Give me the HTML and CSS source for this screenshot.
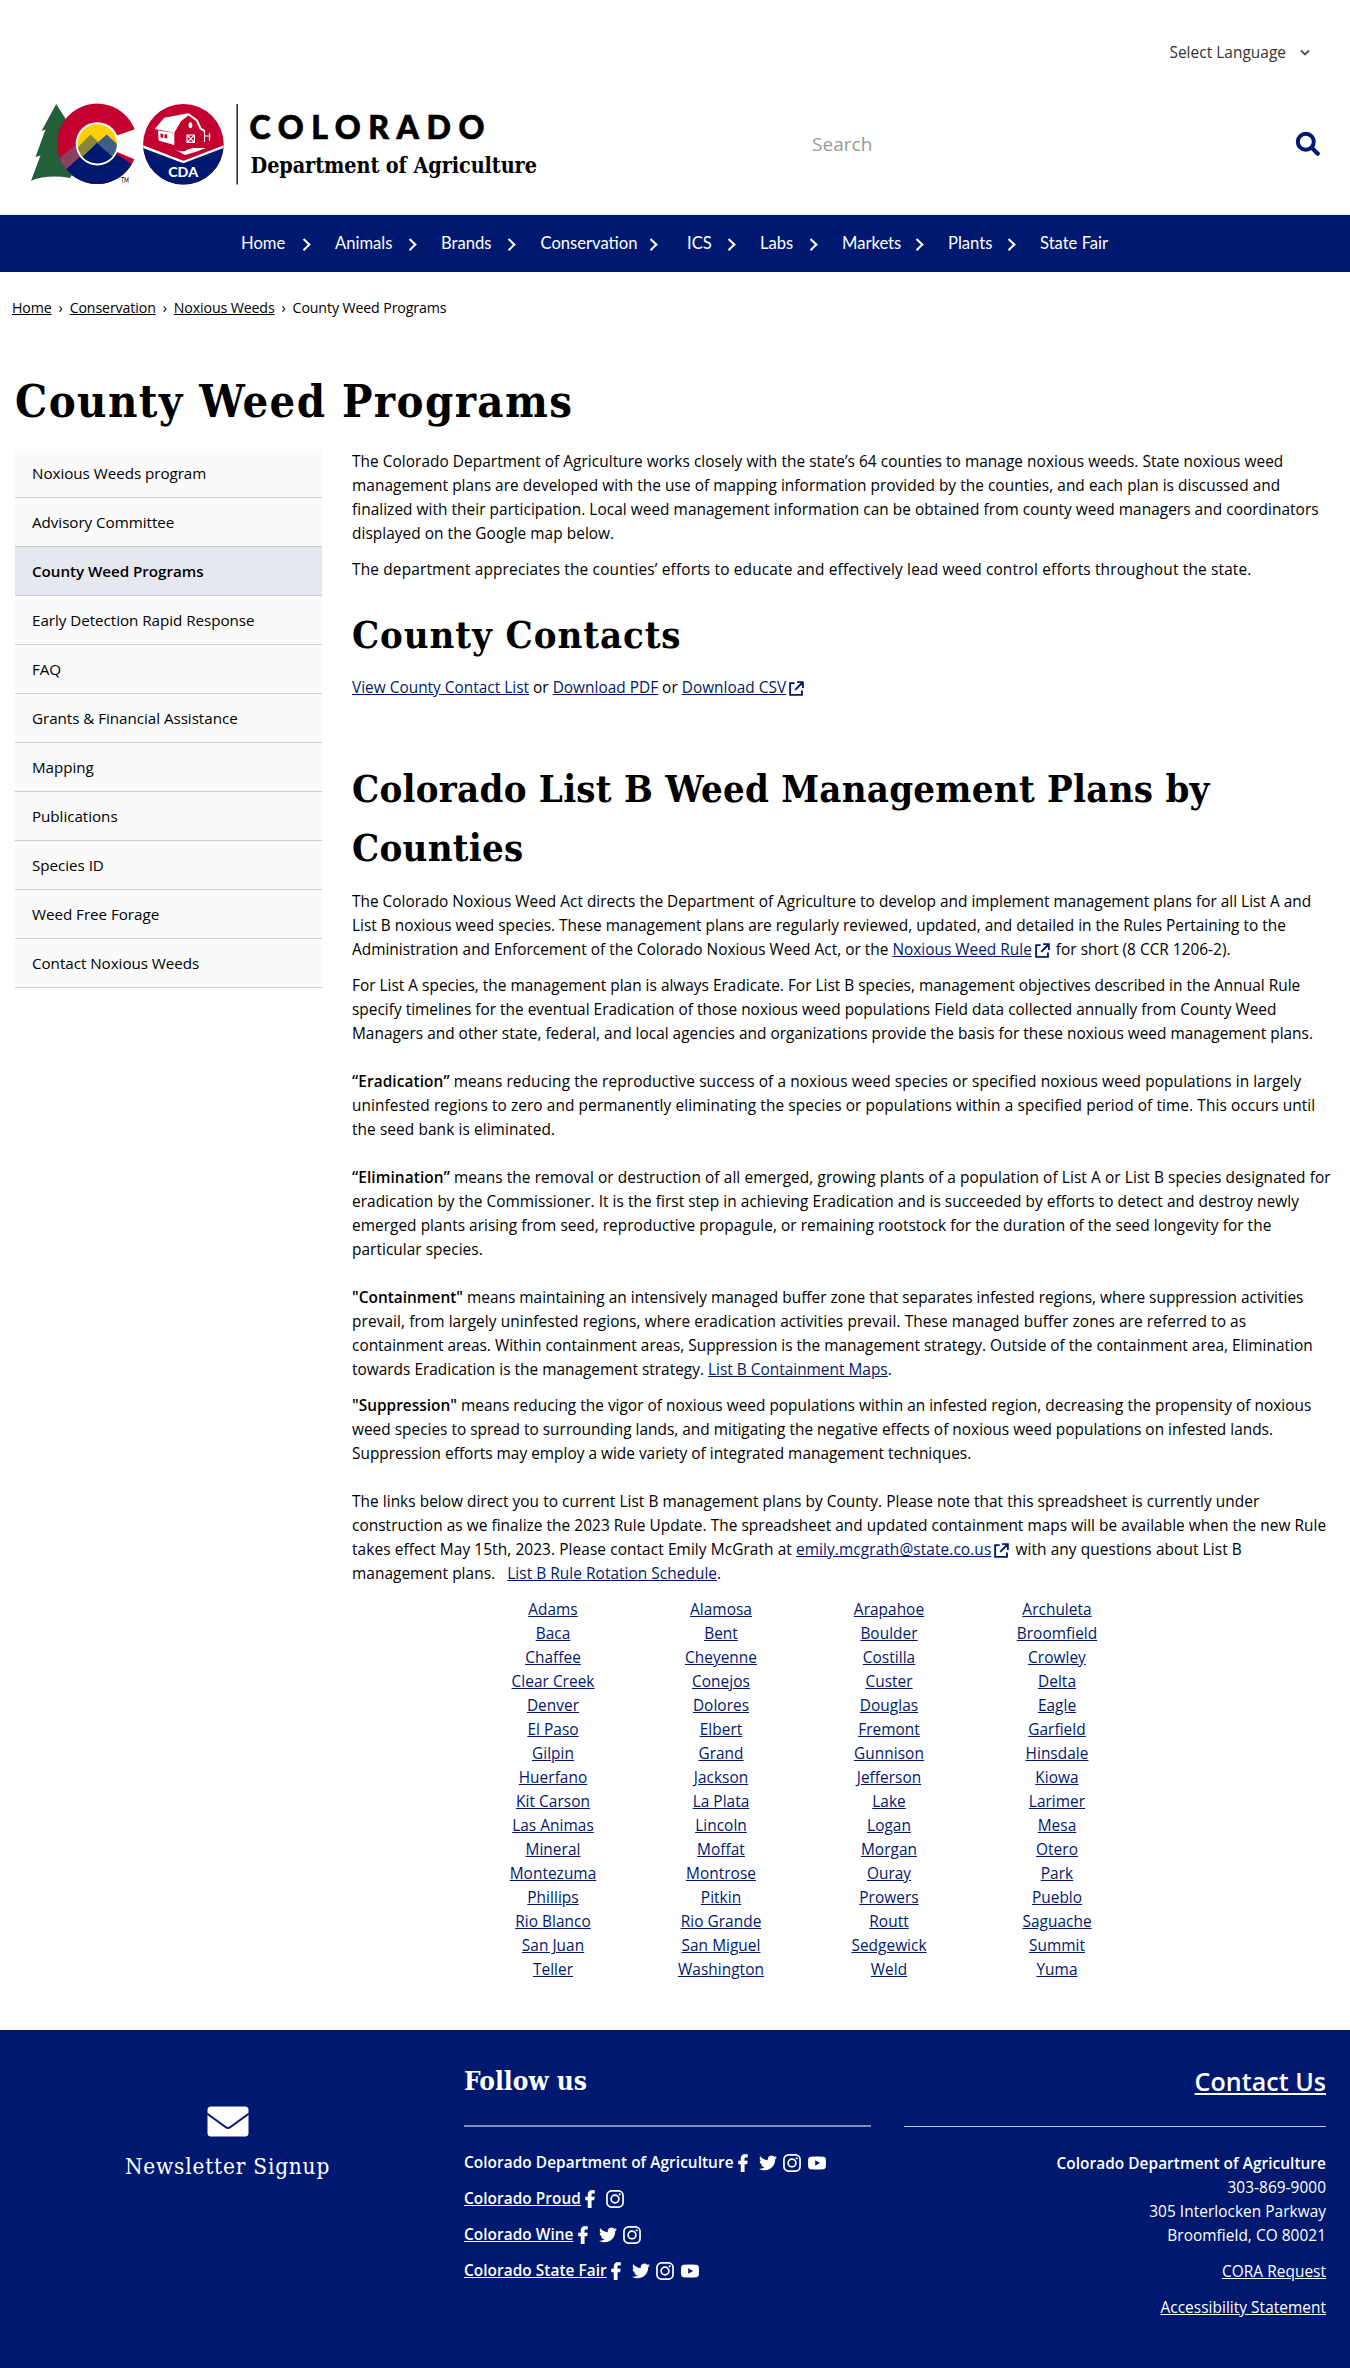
FILE: index.html
```html
<!DOCTYPE html>
<html lang="en">
<head>
<meta charset="utf-8">
<title>County Weed Programs | Department of Agriculture</title>
<link rel="stylesheet" href="styles.css">
</head>
<body>
<svg class="defs" width="0" height="0" aria-hidden="true">
  <symbol id="ext" viewBox="0 0 16 16"><path d="M6 2.2H1.2v12.6h12.6V10M8.6 1.2h6.2v6.2M14.4 1.6L6.6 9.4" fill="none" stroke="currentColor" stroke-width="2"/></symbol>
  <symbol id="fb" viewBox="0 0 18 18"><path d="M7 18v-8H4.500V6.900H7V4.700C7 1.700 8.600.2 11.200.2c1 0 1.800.1 2.300.2v2.800h-1.700c-1.200 0-1.500.6-1.500 1.500v2.200h3.100L12.900 10h-2.600v8z" fill="currentColor" stroke="currentColor" stroke-width=".5"/></symbol>
  <symbol id="tw" viewBox="0 0 24 24"><path d="M23.950 4.570a10 10 0 0 1-2.820.77 4.960 4.960 0 0 0 2.160-2.720c-.95.550-2 .960-3.130 1.180a4.920 4.920 0 0 0-8.380 4.480C7.690 8.090 4.070 6.130 1.640 3.160a4.820 4.820 0 0 0-.66 2.480c0 1.710.87 3.210 2.190 4.100a4.900 4.900 0 0 1-2.230-.62v.06a4.920 4.920 0 0 0 3.950 4.830 5 5 0 0 1-2.210.08 4.940 4.940 0 0 0 4.600 3.420A9.870 9.870 0 0 1 0 19.540a14 14 0 0 0 7.550 2.210c9.050 0 14-7.500 14-13.980 0-.21 0-.42-.02-.63a9.900 9.900 0 0 0 2.420-2.570z" fill="currentColor"/></symbol>
  <symbol id="ig" viewBox="0 0 18 18"><g fill="none" stroke="currentColor" stroke-width="1.700"><rect x=".95" y=".95" width="16.100" height="16.100" rx="4.500"/><circle cx="9" cy="9" r="3.900"/></g><circle cx="13.700" cy="4.300" r="1.100" fill="currentColor"/></symbol>
  <symbol id="yt" viewBox="0 0 18 18"><path fill-rule="evenodd" d="M2.500 2.700Q9 2.200 15.500 2.700 17.600 2.900 17.800 5q.4 4 0 8-.2 2.100-2.300 2.300-6.500.5-13 0Q.4 15.100.2 13q-.4-4 0-8 .2-2.100 2.300-2.300zM7.200 6.200v5.600L12.100 9z" fill="currentColor"/></symbol>
</svg>

<header class="header">
  <div class="language"><span>Select Language</span>
    <svg width="10" height="8" viewBox="0 0 10 8"><path d="M1 1.500l4 4 4-4" fill="none" stroke="#555" stroke-width="1.900"/></svg>
  </div>
  <div class="masthead">
    <svg class="logo" width="520" height="96" viewBox="25 96 520 96" role="img" aria-label="Colorado Department of Agriculture">
      <path fill="#23603a" d="M56.200 104L41.500 131l4-1.500-10 27.500 5-1.500-9.500 25.200Q48 174 70 178L92 144 66 123l1-2z"/>
      <clipPath id="c"><path d="M134.700 129.300A40.200 40.200 0 1 0 134.300 159.300L119 152.700 97 144 118.300 135z"/></clipPath>
      <g clip-path="url(#c)">
        <rect x="55" y="100" width="84" height="90" fill="#c3002f"/>
        <path fill="#8d3f62" d="M50 166L91 132l15 12-40 38z"/>
        <path fill="#001970" d="M62 173l35-32 45 30v20H62z"/>
      </g>
      <circle cx="97.300" cy="143.800" r="21.600" fill="#fff"/>
      <clipPath id="d"><circle cx="97.300" cy="143.800" r="19.600"/></clipPath>
      <g clip-path="url(#d)">
        <rect x="76" y="122" width="43" height="43" fill="#ffd100"/>
        <path fill="#8a8538" d="M75 150l15.500-15.500 14 14L80 165z"/>
        <path fill="#3b5f8a" d="M96 144l10.700-9.500 14 13v12H96z"/>
        <path fill="#001970" d="M78 161l19-18 21 19v6H78z"/>
      </g>
      <text x="121" y="183" class="tm" textLength="8" lengthAdjust="spacingAndGlyphs">TM</text>
      <clipPath id="b"><circle cx="183.400" cy="144.300" r="40.300"/></clipPath>
      <g clip-path="url(#b)">
        <rect x="142" y="103" width="83" height="83" fill="#c3002f"/>
        <path fill="#001970" stroke="#fff" stroke-width="2.400" d="M140 145.500l43.400 16.500 43.400-16.500V190H140z"/>
      </g>
      <g fill="#fff">
        <path d="M154.700 129l9.500-11.300L188 113.300l-8.500 8-7 11z"/>
        <path d="M158 130.500l14.300 2 2 12.500-15.600-4.500z"/>
        <ellipse cx="190.400" cy="125.300" rx="1.900" ry="3"/>
        <path d="M172 148.500q7 3.600 13 2.600 3-2.400 9-3.200h12q-10 4.200-21 7-7-4-13-6.400z"/>
      </g>
      <path fill="#c3002f" d="M160.500 133.500l2.700.4v4l-2.700-.6zM164.500 134.200l2.700.4v4l-2.700-.6z"/>
      <g fill="none" stroke="#fff">
        <path stroke-width="2" d="M173.300 144.500v-12l7-12 8-6.200 8.700 6.200 3.500 8 4 2.500"/>
        <path stroke-width="1.100" d="M187 135h7.400v7.400H187zl7.400 7.400m0-7.400l-7.400 7.400M204.500 130v12M209.500 133v8M204.500 136h6"/>
      </g>
      <text x="168.200" y="176.600" class="cda" textLength="30" lengthAdjust="spacingAndGlyphs">CDA</text>
      <path d="M237.200 104v80.500" stroke="#333" stroke-width="1.600"/>
      <text x="249.500" y="139" class="state" textLength="235">COLORADO</text>
      <text x="250.500" y="173" class="dept" textLength="286.500">Department of Agriculture</text>
    </svg>
    <div class="search"><span>Search</span>
      <svg width="26" height="26" viewBox="0 0 26 26"><circle cx="10.800" cy="10.800" r="8" fill="none" stroke="#001970" stroke-width="4"/><path d="M16.800 16.800l6 6" stroke="#001970" stroke-width="4.200" stroke-linecap="round"/></svg>
    </div>
  </div>
</header>

<nav class="nav">
  <a class="more">Home</a><a class="more">Animals</a><a class="more">Brands</a><a class="more wide">Conservation</a><a class="more">ICS</a><a class="more">Labs</a><a class="more">Markets</a><a class="more">Plants</a><a>State Fair</a>
</nav>

<div class="breadcrumb"><u>Home</u><i>›</i><u>Conservation</u><i>›</i><u>Noxious Weeds</u><i>›</i><span>County Weed Programs</span></div>

<h1>County Weed Programs</h1>

<div class="columns">
  <ul class="side">
    <li>Noxious Weeds program</li><li>Advisory Committee</li><li class="active">County Weed Programs</li><li>Early Detection Rapid Response</li><li>FAQ</li><li>Grants &amp; Financial Assistance</li><li>Mapping</li><li>Publications</li><li>Species ID</li><li>Weed Free Forage</li><li>Contact Noxious Weeds</li>
  </ul>
  <main>
    <p>The Colorado Department of Agriculture works closely with the state’s 64 counties to manage noxious weeds. State noxious weed<br>management plans are developed with the use of mapping information provided by the counties, and each plan is discussed and<br>finalized with their participation. Local weed management information can be obtained from county weed managers and coordinators<br>displayed on the Google map below.</p>
    <p class="loose">The department appreciates the counties’ efforts to educate and effectively lead weed control efforts throughout the state.</p>
    <h2>County Contacts</h2>
    <p class="tight"><a>View County Contact List</a> or <a>Download PDF</a> or <a>Download CSV</a><svg class="ext"><use href="#ext"/></svg></p>
    <h2 class="plans">Colorado List B Weed Management Plans by<br>Counties</h2>
    <p class="tight">The Colorado Noxious Weed Act directs the Department of Agriculture to develop and implement management plans for all List A and<br>List B noxious weed species. These management plans are regularly reviewed, updated, and detailed in the Rules Pertaining to the<br>Administration and Enforcement of the Colorado Noxious Weed Act, or the <a>Noxious Weed Rule</a><svg class="ext"><use href="#ext"/></svg> for short (8 CCR 1206-2).</p>
    <p><span class="tight">For List A species, the management plan is always Eradicate. For List B species, management objectives described in the Annual Rule<br>specify timelines for the eventual Eradication of those noxious weed populations Field data collected annually from County Weed<br>Managers and other state, federal, and local agencies and organizations provide the basis for these noxious weed management plans.</span><br><br><span class="open"><b>“Eradication”</b> means reducing the reproductive success of a noxious weed species or specified noxious weed populations in largely<br>uninfested regions to zero and permanently eliminating the species or populations within a specified period of time. This occurs until<br>the seed bank is eliminated.<br><br><b>“Elimination”</b> means the removal or destruction of all emerged, growing plants of a population of List A or List B species designated for</span><br>eradication by the Commissioner. It is the first step in achieving Eradication and is succeeded by efforts to detect and destroy newly<br>emerged plants arising from seed, reproductive propagule, or remaining rootstock for the duration of the seed longevity for the<br>particular species.<br><br><span class="tight"><b>"Containment"</b> means maintaining an intensively managed buffer zone that separates infested regions, where suppression activities</span><br><span class="open">prevail, from largely uninfested regions, where eradication activities prevail. These managed buffer zones are referred to as</span><br><span class="tight">containment areas. Within containment areas, Suppression is the management strategy. Outside of the containment area, Elimination<br>towards Eradication is the management strategy. <a>List B Containment Maps</a>.</span></p>
    <p><span class="tight"><b>"Suppression"</b> means reducing the vigor of noxious weed populations within an infested region, decreasing the propensity of noxious<br>weed species to spread to surrounding lands, and mitigating the negative effects of noxious weed populations on infested lands.<br>Suppression efforts may employ a wide variety of integrated management techniques.</span><br><br>The links below direct you to current List B management plans by County. Please note that this spreadsheet is currently under<br>construction as we finalize the 2023 Rule Update. The spreadsheet and updated containment maps will be available when the new Rule<br><span class="open">takes effect May 15th, 2023. Please contact Emily McGrath at <a>emily.mcgrath@state.co.us</a><svg class="ext"><use href="#ext"/></svg> with any questions about List B</span><br>management plans. &nbsp; <a>List B Rule Rotation Schedule</a>.</p>
    <div class="counties">
      <a>Adams</a><a>Alamosa</a><a>Arapahoe</a><a>Archuleta</a>
      <a>Baca</a><a>Bent</a><a>Boulder</a><a>Broomfield</a>
      <a>Chaffee</a><a>Cheyenne</a><a>Costilla</a><a>Crowley</a>
      <a>Clear Creek</a><a>Conejos</a><a>Custer</a><a>Delta</a>
      <a>Denver</a><a>Dolores</a><a>Douglas</a><a>Eagle</a>
      <a>El Paso</a><a>Elbert</a><a>Fremont</a><a>Garfield</a>
      <a>Gilpin</a><a>Grand</a><a>Gunnison</a><a>Hinsdale</a>
      <a>Huerfano</a><a>Jackson</a><a>Jefferson</a><a>Kiowa</a>
      <a>Kit Carson</a><a>La Plata</a><a>Lake</a><a>Larimer</a>
      <a>Las Animas</a><a>Lincoln</a><a>Logan</a><a>Mesa</a>
      <a>Mineral</a><a>Moffat</a><a>Morgan</a><a>Otero</a>
      <a>Montezuma</a><a>Montrose</a><a>Ouray</a><a>Park</a>
      <a>Phillips</a><a>Pitkin</a><a>Prowers</a><a>Pueblo</a>
      <a>Rio Blanco</a><a>Rio Grande</a><a>Routt</a><a>Saguache</a>
      <a>San Juan</a><a>San Miguel</a><a>Sedgewick</a><a>Summit</a>
      <a>Teller</a><a>Washington</a><a>Weld</a><a>Yuma</a>
    </div>
  </main>
</div>

<footer class="footer">
  <section class="newsletter">
    <svg width="42" height="31" viewBox="0 0 42 31"><rect width="41" height="30" x=".5" y=".5" rx="3.500" fill="#fff"/><path d="M0 7.500L18.500 21q2.500 2 5 0L42 7.500" fill="none" stroke="#001970" stroke-width="2"/></svg>
    <div>Newsletter Signup</div>
  </section>
  <section class="follow">
    <h3>Follow us</h3>
    <div class="row">Colorado Department of Agriculture<svg class="fb"><use href="#fb"/></svg><svg><use href="#tw"/></svg><svg><use href="#ig"/></svg><svg><use href="#yt"/></svg></div>
    <div class="row"><u>Colorado Proud</u><svg class="fb"><use href="#fb"/></svg><svg><use href="#ig"/></svg></div>
    <div class="row"><u>Colorado Wine</u><svg class="fb"><use href="#fb"/></svg><svg><use href="#tw"/></svg><svg><use href="#ig"/></svg></div>
    <div class="row"><u>Colorado State Fair</u><svg class="fb"><use href="#fb"/></svg><svg><use href="#tw"/></svg><svg><use href="#ig"/></svg><svg><use href="#yt"/></svg></div>
  </section>
  <section class="contact">
    <h3><u>Contact Us</u></h3>
    <p><b>Colorado Department of Agriculture</b><br>303-869-9000<br>305 Interlocken Parkway<br>Broomfield, CO 80021</p>
    <p><u>CORA Request</u></p>
    <p><u>Accessibility Statement</u></p>
  </section>
</footer>
</body>
</html>
```
FILE: styles.css
```css
* { box-sizing: border-box; }
body { margin: 0; background: #fff; color: #000; font: 15.4px/24px "Open Sans", "Noto Sans", sans-serif; letter-spacing: .05px; }
.defs { display: block; }
h1, h2, h3, p, ul { margin: 0; padding: 0; }

.header { height: 215px; padding-top: 41px; border-bottom: 1px solid #eef0f6; }
.language { display: flex; align-items: center; justify-content: flex-end; gap: 14px; padding-right: 40px; color: #333; height: 24px; }
.masthead { display: flex; align-items: flex-start; justify-content: space-between; padding: 31px 29px 0 25px; }
.logo { display: block; }
.tm { font: 7px Lato, sans-serif; }
.cda { font: 900 14px Lato, sans-serif; fill: #fff; }
.state { font: 900 32px Lato, sans-serif; stroke: #000; stroke-width: .7px; }
.dept { font: bold 21.400px "DejaVu Serif Condensed", "DejaVu Serif", serif; }
.search { display: flex; justify-content: space-between; align-items: center; width: 509px; height: 96px; color: #999; font-size: 19px; }

.nav { display: grid; grid-template-columns: 94px 106px 99.500px 146.500px 73px 82px 106px 92px auto; background: #001970; color: #fff; height: 57px; padding: 0 200px 0 241px; font: 16.600px/57px Lato, sans-serif; letter-spacing: 0; white-space: nowrap; }
.more { display: flex; justify-content: space-between; align-items: center; padding-right: 27px; }
.wide { padding-right: 32px; }
.more::after { content: ""; width: 6.500px; height: 6.500px; margin-top: 2px; border: solid #fff; border-width: 2px 2px 0 0; transform: rotate(45deg); }

.breadcrumb { display: flex; padding: 24px 12px 0; font-size: 14.200px; letter-spacing: -.120px; }
.breadcrumb i { font-style: normal; width: 18px; text-align: center; }
h1, h2 { font-family: "DejaVu Serif Condensed", "DejaVu Serif", serif; font-stretch: condensed; font-weight: bold; white-space: nowrap; }
h1 { font-size: 45px; line-height: 60px; letter-spacing: 1.400px; padding: 52px 0 0 15px; }
.columns { display: flex; gap: 30px; padding: 17px 0 48px 15px; }

.side { list-style: none; width: 307px; align-self: flex-start; }
.side li { height: 49px; padding: 12px 17px; background: #fafafa; border-bottom: 1px solid #ccc; letter-spacing: -.04px; font-size: 15.200px; }
.side .active { background: #e6e8f0; font-weight: 600; }

main { flex: 1; white-space: nowrap; padding-top: 1px; }
main p { margin-bottom: 12px; }
main .loose { letter-spacing: .170px; }
.tight { letter-spacing: .015px; }
.open { letter-spacing: .095px; }
main a { color: #001970; text-decoration: underline; }
b { font-weight: 600; }
h2 { font-size: 38px; line-height: 59px; letter-spacing: .900px; margin: 23px 0 12px; }
.plans { margin: 59px 0 13px; letter-spacing: .250px; }
.ext { width: 15px; height: 15px; margin: 0 2px 0 3px; vertical-align: -3px; color: #001970; }
.counties { display: grid; grid-template-columns: repeat(4, 168px); padding-left: 117px; text-align: center; }

.footer { display: grid; grid-template-columns: 455px 416px 455px; height: 340px; background: #001970; color: #fff; }
.newsletter { padding-top: 76px; text-align: center; }
.newsletter svg { display: block; margin: 0 auto; }
.newsletter div { font: 22.400px/30px "DejaVu Serif Condensed", "DejaVu Serif", serif; font-stretch: condensed; letter-spacing: .800px; margin-top: 14px; }
h3 { font-weight: 600; line-height: 40px; padding-top: 31px; height: 97px; margin-bottom: 24px; white-space: nowrap; }
.follow { padding-left: 9px; font-weight: 600; }
.follow h3 { font-family: "DejaVu Serif Condensed", "DejaVu Serif", serif; font-stretch: condensed; font-size: 26px; font-weight: bold; border-bottom: 2px solid #7f8cb8; }
.row { display: flex; align-items: center; height: 24px; margin-bottom: 12px; }
.row svg { width: 18px; height: 18px; margin-left: 6.500px; }
.row .fb { margin: 0; }
.fb + svg { margin-left: 7px; }
.contact { padding-left: 33px; text-align: right; }
.contact h3 { font-size: 25px; border-bottom: 1px solid #c5cbe2; margin-bottom: 25px; }
.contact p { margin-bottom: 12px; }
```
